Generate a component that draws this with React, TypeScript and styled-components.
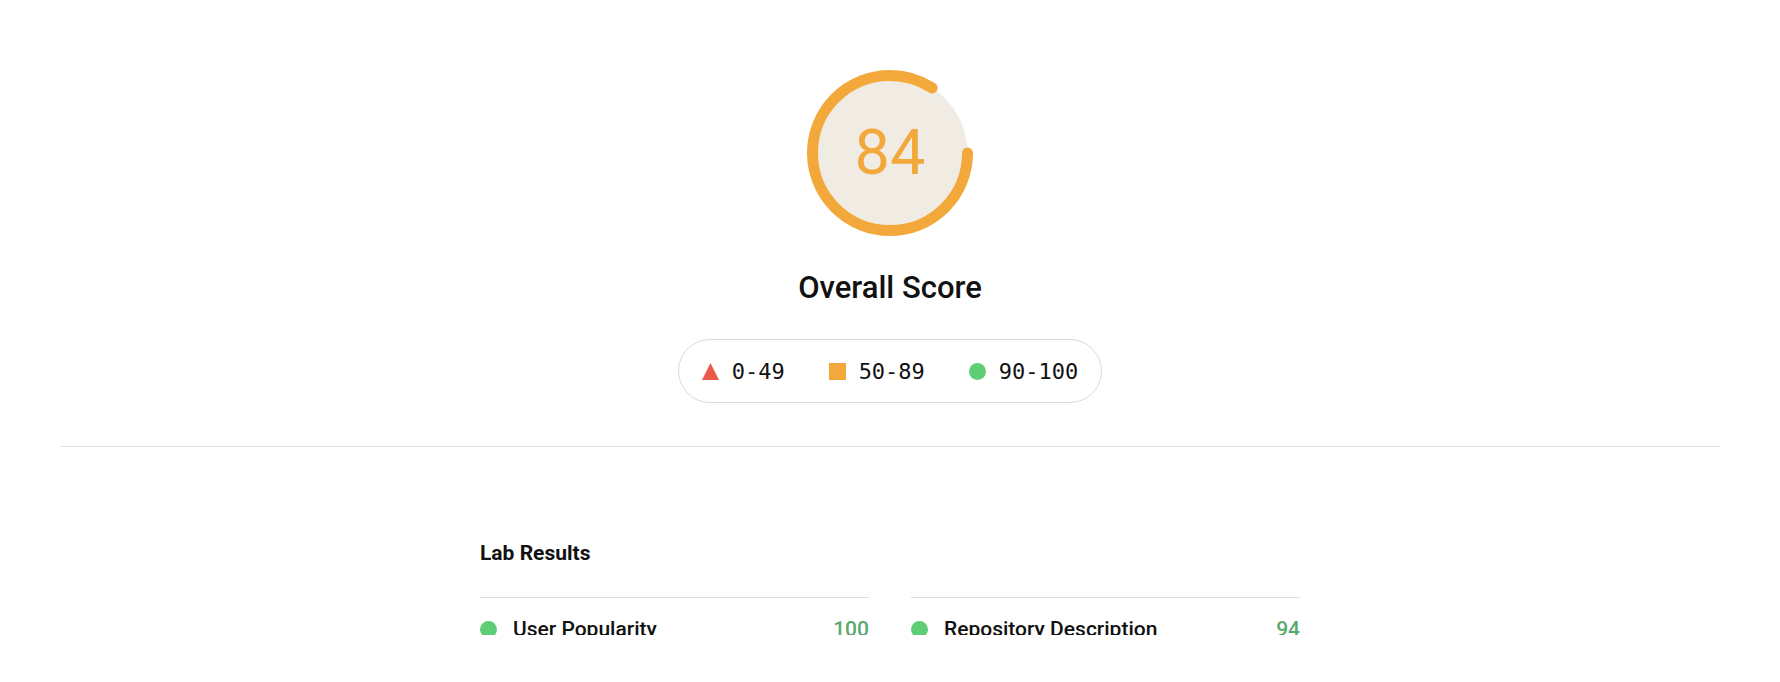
import React from "react";
import styled, { createGlobalStyle } from "styled-components";

const ORANGE = "#f3a83b";
const RED = "#ea5a4a";
const GREEN = "#5ecd74";
const GREEN_TEXT = "#5aa96c";

const Global = createGlobalStyle`
  html, body { margin: 0; padding: 0; background: #ffffff; }
  body { font-family: Roboto, "Noto Sans", Arial, sans-serif; color: #111111; }
`;

const Page = styled.div`
  height: 635px;
  overflow: hidden;
  padding: 0 60px;
  box-sizing: border-box;
`;

const Header = styled.header`
  display: flex;
  flex-direction: column;
  align-items: center;
  padding-top: 70px;
`;

const GaugeWrap = styled.div`
  position: relative;
  width: 166px;
  height: 166px;
`;

const GaugeNumber = styled.div`
  position: absolute;
  inset: 0;
  display: flex;
  align-items: center;
  justify-content: center;
  font-size: 63px;
  font-weight: 400;
  color: ${ORANGE};
  line-height: 1;
  padding-bottom: 1px;
`;

const Title = styled.h1`
  margin: 35px 0 0;
  font-size: 31px;
  line-height: 34px;
  font-weight: 500;
  color: #111;
`;

const Legend = styled.div`
  margin-top: 34px;
  height: 64px;
  box-sizing: border-box;
  border: 1px solid #d9d9d9;
  border-radius: 32px;
  padding: 0 23px;
  display: flex;
  align-items: center;
  gap: 44px;
`;

const LegendItem = styled.div`
  display: flex;
  align-items: center;
  gap: 13px;
  font-family: "DejaVu Sans Mono", "Liberation Mono", monospace;
  font-size: 22px;
  color: #111;
`;

const Square = styled.span`
  width: 17px;
  height: 17px;
  background: ${ORANGE};
  display: block;
`;

const Dot = styled.span<{ $size: number }>`
  width: ${(p) => p.$size}px;
  height: ${(p) => p.$size}px;
  border-radius: 50%;
  background: ${GREEN};
  display: block;
  flex: none;
`;

const Divider = styled.hr`
  margin: 43px 0 0;
  border: none;
  border-top: 1px solid #e3e3e3;
`;

const Lab = styled.section`
  width: 820px;
  margin: 94px auto 0;
`;

const LabTitle = styled.h2`
  margin: 0;
  font-size: 21px;
  line-height: 24px;
  font-weight: 700;
`;

const Columns = styled.div`
  margin-top: 32px;
  display: grid;
  grid-template-columns: 1fr 1fr;
  column-gap: 42px;
`;

const Row = styled.div`
  border-top: 1px solid #dddddd;
  padding: 17px 0;
  display: flex;
  align-items: center;
  gap: 16px;
  font-size: 21px;
  line-height: 28px;
  font-weight: 500;
`;

const RowLabel = styled.span`
  flex: 1;
  color: #111;
`;

const RowScore = styled.span`
  color: ${GREEN_TEXT};
`;

const Triangle = () => (
  <svg width="17" height="17" viewBox="0 0 17 17">
    <polygon points="8.5,0 17,17 0,17" fill={RED} />
  </svg>
);

const Gauge = ({ value }: { value: number }) => {
  const r = 77.5;
  const c = 2 * Math.PI * r;
  return (
    <GaugeWrap>
      <svg width="166" height="166" viewBox="0 0 166 166">
        <circle cx="83" cy="83" r={r} fill="#f0ece3" />
        <circle
          cx="83"
          cy="83"
          r={r}
          fill="none"
          stroke={ORANGE}
          strokeWidth="11"
          strokeLinecap="round"
          strokeDasharray={`${(value / 100) * c} ${c}`}
        />
      </svg>
      <GaugeNumber>{value}</GaugeNumber>
    </GaugeWrap>
  );
};

const rows = [
  { label: "User Popularity", score: 100 },
  { label: "Repository Description", score: 94 },
];

export default function App() {
  return (
    <>
      <Global />
      <Page>
        <Header>
          <Gauge value={84} />
          <Title>Overall Score</Title>
          <Legend>
            <LegendItem>
              <Triangle />
              0-49
            </LegendItem>
            <LegendItem>
              <Square />
              50-89
            </LegendItem>
            <LegendItem>
              <Dot $size={17} />
              90-100
            </LegendItem>
          </Legend>
        </Header>
        <Divider />
        <Lab>
          <LabTitle>Lab Results</LabTitle>
          <Columns>
            {rows.map((r) => (
              <Row key={r.label}>
                <Dot $size={17} />
                <RowLabel>{r.label}</RowLabel>
                <RowScore>{r.score}</RowScore>
              </Row>
            ))}
          </Columns>
        </Lab>
      </Page>
    </>
  );
}
